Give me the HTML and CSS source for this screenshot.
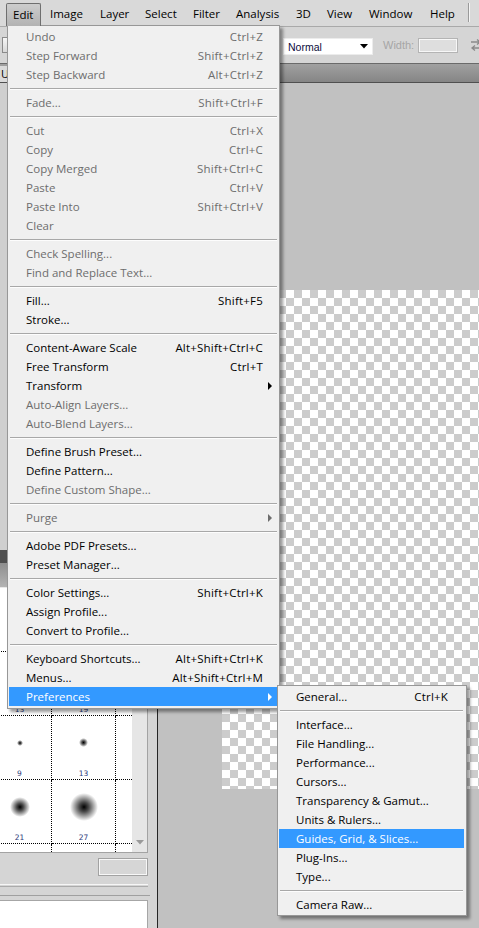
FILE: index.html
```html
<!DOCTYPE html>
<html>
<head>
<meta charset="utf-8">
<title>Photoshop Edit menu</title>
<link rel="stylesheet" href="styles.css">
</head>
<body>
<div class="app">
  <div class="menubar">
    <span class="mb mb-edit">Edit</span>
    <span class="mb">Image</span>
    <span class="mb">Layer</span>
    <span class="mb">Select</span>
    <span class="mb">Filter</span>
    <span class="mb">Analysis</span>
    <span class="mb">3D</span>
    <span class="mb">View</span>
    <span class="mb">Window</span>
    <span class="mb">Help</span>
    <span class="mb-sep"></span>
  </div>
  <div class="options">
    <div class="tool-preset"></div>
    <div class="select"><span>Normal</span><svg class="dd" width="8" height="5" viewBox="0 0 8 5"><path d="M0 0H8L4 4.5Z" fill="#000"/></svg></div>
    <span class="opt-label">Width:</span>
    <div class="opt-input"></div>
    <svg class="swap" width="14" height="14" viewBox="0 0 14 14"><path d="M2 4H11M8 1.5L11 4L8 6.5M12 10H3M6 7.5L3 10L6 12.5" stroke="#8a8a8a" stroke-width="1.3" fill="none"/></svg>
  </div>
  <div class="tabbar"><div class="doctab">Untitled-1</div></div>
  <div class="work">
    <div class="dock">
      <div class="dock-top"></div>
      <div class="dock-head"></div>
      <div class="dock-tabs"></div>
      <div class="brush-frame">
        <div class="grid-wrap">
          <div class="brush-grid">
            <div class="cell"><div class="tip"><i class="dot d1"></i></div><div class="num">1</div></div>
            <div class="cell"><div class="tip"><i class="dot d2"></i></div><div class="num">3</div></div>
            <div class="cell"></div>
            <div class="cell"><div class="tip"><i class="dot d5"></i></div><div class="num">13</div></div>
            <div class="cell"><div class="tip"><i class="dot d6"></i></div><div class="num">19</div></div>
            <div class="cell"></div>
            <div class="cell"><div class="tip"><i class="dot s1"></i></div><div class="num">9</div></div>
            <div class="cell"><div class="tip"><i class="dot s2"></i></div><div class="num">13</div></div>
            <div class="cell"></div>
            <div class="cell"><div class="tip"><i class="dot s5"></i></div><div class="num">21</div></div>
            <div class="cell"><div class="tip"><i class="dot s6"></i></div><div class="num">27</div></div>
            <div class="cell"></div>
            <div class="cell"></div>
            <div class="cell"></div>
            <div class="cell"></div>
          </div>
        </div>
        <div class="vscroll"><svg width="8" height="5" viewBox="0 0 8 5"><path d="M0 0H8L4 4.5Z" fill="#9a9a9a"/></svg></div>
      </div>
      <div class="brush-foot"><div class="foot-input"></div></div>
      <div class="dock-rule"></div>
      <div class="dock-rule2"></div>
      <div class="dock-panel"></div>
    </div>
    <div class="canvas-area"><div class="doc"></div></div>
  </div>
</div>

<div class="menu menu-main">
  <div class="mi off"><span>Undo</span><span class="sc">Ctrl+Z</span></div>
  <div class="mi off"><span>Step Forward</span><span class="sc">Shift+Ctrl+Z</span></div>
  <div class="mi off"><span>Step Backward</span><span class="sc">Alt+Ctrl+Z</span></div>
  <div class="msep"></div>
  <div class="mi off"><span>Fade...</span><span class="sc">Shift+Ctrl+F</span></div>
  <div class="msep"></div>
  <div class="mi off"><span>Cut</span><span class="sc">Ctrl+X</span></div>
  <div class="mi off"><span>Copy</span><span class="sc">Ctrl+C</span></div>
  <div class="mi off"><span>Copy Merged</span><span class="sc">Shift+Ctrl+C</span></div>
  <div class="mi off"><span>Paste</span><span class="sc">Ctrl+V</span></div>
  <div class="mi off"><span>Paste Into</span><span class="sc">Shift+Ctrl+V</span></div>
  <div class="mi off"><span>Clear</span></div>
  <div class="msep"></div>
  <div class="mi off"><span>Check Spelling...</span></div>
  <div class="mi off"><span>Find and Replace Text...</span></div>
  <div class="msep"></div>
  <div class="mi"><span>Fill...</span><span class="sc">Shift+F5</span></div>
  <div class="mi"><span>Stroke...</span></div>
  <div class="msep"></div>
  <div class="mi"><span>Content-Aware Scale</span><span class="sc">Alt+Shift+Ctrl+C</span></div>
  <div class="mi"><span>Free Transform</span><span class="sc">Ctrl+T</span></div>
  <div class="mi"><span>Transform</span><i class="arrow"></i></div>
  <div class="mi off"><span>Auto-Align Layers...</span></div>
  <div class="mi off"><span>Auto-Blend Layers...</span></div>
  <div class="msep"></div>
  <div class="mi"><span>Define Brush Preset...</span></div>
  <div class="mi"><span>Define Pattern...</span></div>
  <div class="mi off"><span>Define Custom Shape...</span></div>
  <div class="msep"></div>
  <div class="mi off"><span>Purge</span><i class="arrow"></i></div>
  <div class="msep"></div>
  <div class="mi"><span>Adobe PDF Presets...</span></div>
  <div class="mi"><span>Preset Manager...</span></div>
  <div class="msep"></div>
  <div class="mi"><span>Color Settings...</span><span class="sc">Shift+Ctrl+K</span></div>
  <div class="mi"><span>Assign Profile...</span></div>
  <div class="mi"><span>Convert to Profile...</span></div>
  <div class="msep"></div>
  <div class="mi"><span>Keyboard Shortcuts...</span><span class="sc">Alt+Shift+Ctrl+K</span></div>
  <div class="mi"><span>Menus...</span><span class="sc">Alt+Shift+Ctrl+M</span></div>
  <div class="mi hot"><span>Preferences</span><i class="arrow"></i></div>
</div>

<div class="menu menu-sub">
  <div class="mi"><span>General...</span><span class="sc">Ctrl+K</span></div>
  <div class="msep"></div>
  <div class="mi"><span>Interface...</span></div>
  <div class="mi"><span>File Handling...</span></div>
  <div class="mi"><span>Performance...</span></div>
  <div class="mi"><span>Cursors...</span></div>
  <div class="mi"><span>Transparency &amp; Gamut...</span></div>
  <div class="mi"><span>Units &amp; Rulers...</span></div>
  <div class="mi hot"><span>Guides, Grid, &amp; Slices...</span></div>
  <div class="mi"><span>Plug-Ins...</span></div>
  <div class="mi"><span>Type...</span></div>
  <div class="msep"></div>
  <div class="mi"><span>Camera Raw...</span></div>
</div>
</body>
</html>
```

FILE: styles.css
```css
* { box-sizing: border-box; }
html, body { margin: 0; padding: 0; }
body {
  width: 479px;
  height: 928px;
  overflow: hidden;
  position: relative;
  background: #c1c1c1;
  font-family: "Open Sans", "Noto Sans", sans-serif;
  font-size: 11.5px;
  color: #000;
}
.app { width: 479px; height: 928px; display: flex; flex-direction: column; }

/* menu bar */
.menubar {
  flex: none;
  height: 27px;
  display: flex;
  padding: 3px 0 0 6px;
  background: #d9d9d9;
  border-bottom: 1px solid #a9a9a9;
}
.mb { flex: none; height: 23px; line-height: 21px; padding-left: 7px; white-space: nowrap; }
.mb:nth-child(1) { width: 35px; margin-right: 2px; }
.mb:nth-child(2) { width: 50px; }
.mb:nth-child(3) { width: 45px; }
.mb:nth-child(4) { width: 48px; }
.mb:nth-child(5) { width: 43px; }
.mb:nth-child(6) { width: 60px; }
.mb:nth-child(7) { width: 31px; }
.mb:nth-child(8) { width: 42px; }
.mb:nth-child(9) { width: 61px; }
.mb:nth-child(10) { width: 36px; }
.mb-edit {
  position: relative;
  z-index: 5;
  padding-left: 6px;
  background: linear-gradient(#cdcdcd, #b2b2b2);
  border: 1px solid #6f6f6f;
  border-bottom: none;
  border-radius: 2px 2px 0 0;
}
.mb-sep { flex: none; width: 2px; height: 19px; margin-left: 9px; border-left: 1px solid #9a9a9a; border-right: 1px solid #f4f4f4; }

/* options bar */
.options {
  flex: none;
  height: 36px;
  display: flex;
  align-items: center;
  background: #d5d5d5;
  font-family: "Liberation Sans", Arial, sans-serif;
}
.tool-preset { flex: none; width: 18px; height: 16px; margin-left: 2px; border: 1px solid #8a8a8a; background: linear-gradient(#f6f6f6, #d8d8d8); }
.select {
  flex: none;
  width: 90px;
  height: 17px;
  margin: 3px 0 0 263px;
  display: flex;
  align-items: center;
  justify-content: space-between;
  padding: 0 4px 0 4px;
  background: #fff;
  border: 1px solid #ececec;
  font-size: 10.5px;
  color: #0c0c3c;
}
.dd { display: block; }
.opt-label { flex: none; margin-left: 10px; font-size: 11px; color: #a6a6a6; }
.opt-input { flex: none; width: 40px; height: 15px; margin: 1px 0 0 4px; background: #dedede; border: 1px solid #b4b4b4; box-shadow: inset 0 0 0 1px #f7f7f7; }
.swap { flex: none; margin-left: 11px; display: block; }

/* document tab bar */
.tabbar {
  flex: none;
  height: 20px;
  background: linear-gradient(#a0a0a0, #858585);
  border-top: 1px solid #6a6a6a;
  border-bottom: 1px solid #505050;
  display: flex;
  align-items: flex-end;
}
.doctab { width: 230px; height: 16px; padding-left: 1px; line-height: 16px; font-size: 11px; background: #dadada; white-space: nowrap; overflow: hidden; }

/* workspace */
.work { flex: 1; display: flex; min-height: 0; }
.dock {
  flex: none;
  width: 158px;
  display: flex;
  flex-direction: column;
  background: #d5d5d5;
  border-right: 1px solid #262626;
}
.dock-top { flex: none; height: 467px; background: #cfcfcf; }
.dock-head { flex: none; height: 13px; background: #4f4f4f; }
.dock-tabs { flex: none; height: 25px; background: linear-gradient(#8e8e8e, #b3b3b3); border-bottom: 1px solid #e8e8e8; }
.brush-frame {
  flex: none;
  width: 148px;
  height: 265px;
  display: flex;
  border-right: 1px solid #a3a3a3;
  border-bottom: 1px solid #a3a3a3;
}
.grid-wrap { flex: none; width: 132px; height: 264px; background: #fff; overflow: hidden; }
.brush-grid {
  margin-left: -12px;
  display: grid;
  grid-template-columns: repeat(3, 64px);
  grid-auto-rows: 64px;
}
.cell {
  display: flex;
  flex-direction: column;
  align-items: center;
  border-right: 1px dotted #000;
  border-bottom: 1px dotted #000;
}
.tip { height: 54px; display: flex; align-items: center; justify-content: center; }
.num { font-family: "DejaVu Sans", sans-serif; font-size: 7.5px; line-height: 10px; color: #2a3a7a; }
.dot { display: block; border-radius: 50%; background: #000; }
.d1 { width: 1px; height: 1px; }
.d2 { width: 3px; height: 3px; }
.d5 { width: 9px; height: 9px; }
.d6 { width: 12px; height: 12px; }
.s1, .s2, .s5, .s6 { background: radial-gradient(circle closest-side, #000 0, rgba(0,0,0,0.7) 35%, rgba(0,0,0,0) 100%); }
.s1 { width: 6px; height: 6px; }
.s2 { width: 9px; height: 9px; }
.s5 { width: 20px; height: 20px; }
.s6 { width: 28px; height: 28px; }
.vscroll {
  flex: none;
  width: 15px;
  background: #e6e6e6;
  display: flex;
  flex-direction: column;
  justify-content: flex-end;
  align-items: center;
  padding-bottom: 7px;
}
.vscroll svg { display: block; }
.brush-foot { flex: none; height: 31px; display: flex; align-items: flex-start; }
.foot-input { width: 50px; height: 18px; margin: 5px 0 0 98px; background: #d6d6d6; border: 1px solid #a2a2a2; box-shadow: inset 0 0 0 1px #f7f7f7; }
.dock-rule { flex: none; width: 148px; height: 3px; border-top: 1px solid #f6f6f6; border-bottom: 1px solid #ababab; margin-bottom: 8px; }
.dock-rule2 { flex: none; width: 150px; height: 1px; background: #a0a0a0; margin-bottom: 4px; }
.dock-panel { flex: 1; width: 148px; background: #fff; border-top: 1px solid #a6a6a6; border-right: 1px solid #a6a6a6; }

.canvas-area { flex: 1; background: #c1c1c1; overflow: hidden; }
.doc {
  width: 257px;
  height: 499px;
  margin: 207px 0 0 64px;
  background-color: #fff;
  background-image: conic-gradient(#cccccc 25%, #ffffff 0 50%, #cccccc 0 75%, #ffffff 0);
  background-size: 16px 16px;
}

/* menus */
.menu {
  position: absolute;
  z-index: 3;
  background: #f0f0f0;
  border: 1px solid #979797;
  box-shadow: 3px 3px 3px rgba(0, 0, 0, 0.4);
}
.menu-main { left: 7px; top: 25px; width: 273px; padding: 1px 2px 2px 1px; }
.menu-sub { left: 277px; top: 685px; width: 190px; padding: 1px 2px 1px 1px; z-index: 4; }
.mi {
  height: 19px;
  line-height: 19px;
  display: flex;
  justify-content: space-between;
  align-items: center;
  padding: 0 14px 0 17px;
  white-space: nowrap;
}
.menu-sub .mi { padding-right: 16px; }
.mi.off { color: #6d6d6d; }
.mi.hot { background: #3399ff; color: #fff; }
.sc { letter-spacing: 0.2px; }
.arrow {
  display: block;
  width: 0;
  height: 0;
  margin-right: -9px;
  border-left: 4px solid #000;
  border-top: 4px solid transparent;
  border-bottom: 4px solid transparent;
}
.mi.off .arrow { border-left-color: #6d6d6d; }
.mi.hot .arrow { border-left-color: #fff; }
.msep { height: 0; margin: 4px 0 3px 1px; border-top: 1px solid #a8a8a8; border-bottom: 1px solid #fdfdfd; }
.menu-sub .msep { margin-right: 1px; }
```
